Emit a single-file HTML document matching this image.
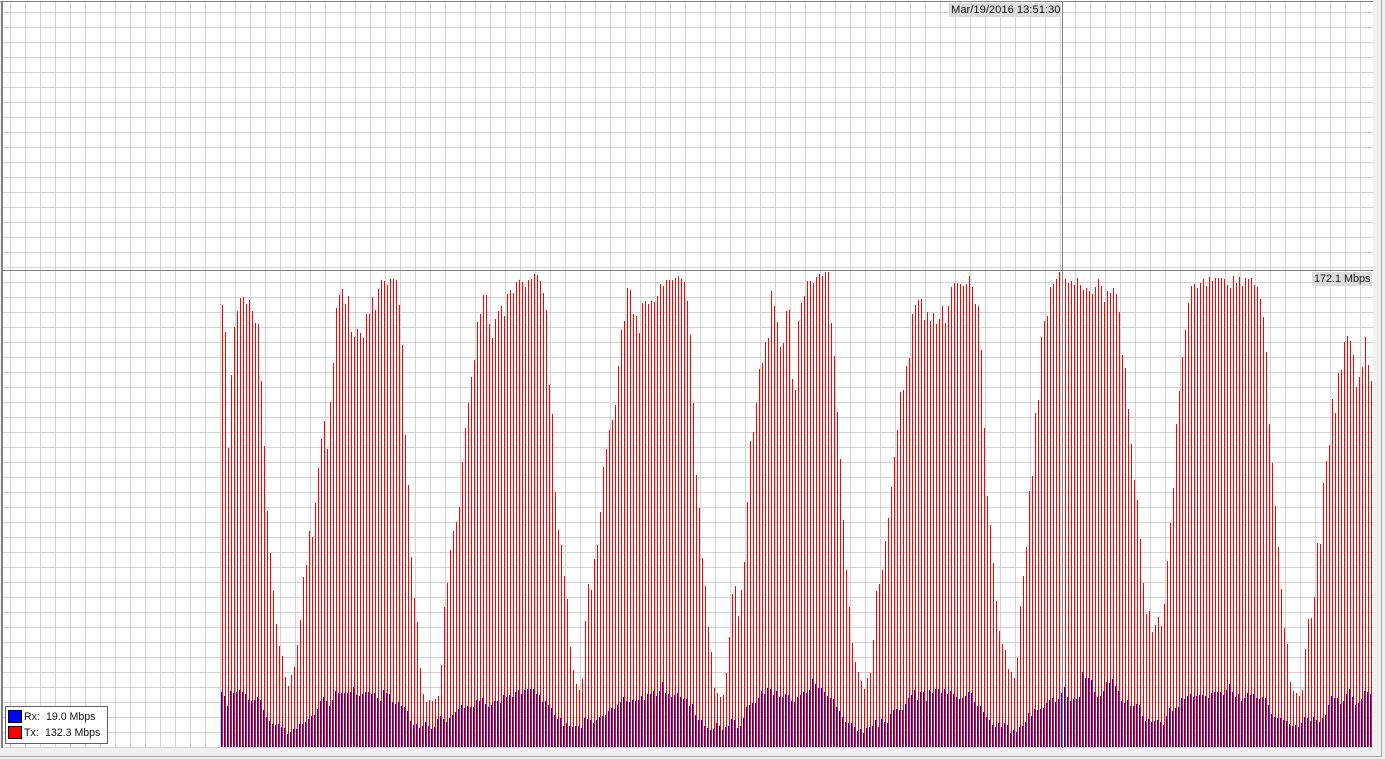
<!DOCTYPE html>
<html><head><meta charset="utf-8"><style>
html,body{margin:0;padding:0;width:1385px;height:759px;overflow:hidden;background:#f0f0f0}
body{position:relative;font-family:"Liberation Sans",sans-serif;font-size:10.6px;color:#111}
div,span,svg{position:absolute;display:block}
#plot{left:3px;top:2px;width:1370px;height:746px;background-color:#fff;background-image:linear-gradient(to right,#d2d2d2 1px,transparent 1px),linear-gradient(to bottom,#d2d2d2 1px,transparent 1px);background-size:15px 15px;background-position:7px 10px}
.t{white-space:nowrap;line-height:13px}
</style></head><body>
<div style="left:0;top:0;width:1373px;height:2px;background:#fff"></div>
<div style="left:0;top:1px;width:1373px;height:1px;background:#808080"></div>
<div style="left:1px;top:1px;width:2px;height:747px;background:#808080"></div>
<div id="plot"></div>
<svg style="left:0;top:0" width="1385" height="759" viewBox="0 0 1385 759">
<g transform="translate(.5,270) scale(1,.33333)" fill="none" stroke-width="1">
<path stroke="#f00" d="M222 1431V105M225 1431V186M228 1431V534M231 1431V315M234 1431V171M237 1431V123M240 1431V84M243 1431V81M246 1431V102M249 1431V90M252 1431V123M255 1431V159M258 1431V162M261 1431V333M264 1431V528M267 1431V723M270 1431V849M273 1431V963M276 1431V1062M279 1431V1128M282 1431V1158M285 1431V1221M288 1431V1248M291 1431V1215M294 1431V1191M297 1431V1125M300 1431V1050M303 1431V921M306 1431V885M309 1431V783M312 1431V801M315 1431V699M318 1431V594M321 1431V507M324 1431V453M327 1431V537M330 1431V396M333 1431V279M336 1431V114M339 1431V75M342 1431V57M345 1431V102M348 1431V78M351 1431V186M354 1431V201M357 1431V177M360 1431V189M363 1431V204M366 1431V132M369 1431V132M372 1431V81M375 1431V120M378 1431V57M381 1431V30M384 1431V33M387 1431V45M390 1431V27M393 1431V27M396 1431V30M399 1431V105M402 1431V225M405 1431V495M408 1431V645
M411 1431V861M414 1431V984M417 1431V1056M420 1431V1194M423 1431V1272M426 1431V1296M429 1431V1290M432 1431V1293M435 1431V1287M438 1431V1278M441 1431V1185M444 1431V1011M447 1431V939M450 1431V840M453 1431V783M456 1431V756M459 1431V711M462 1431V576M465 1431V474M468 1431V399M471 1431V321M474 1431V270M477 1431V156M480 1431V132M483 1431V75M486 1431V75M489 1431V162M492 1431V204M495 1431V147M498 1431V123M501 1431V108M504 1431V138M507 1431V72M510 1431V60M513 1431V69M516 1431V36M519 1431V30M522 1431V36M525 1431V51M528 1431V30M531 1431V27M534 1431V12M537 1431V15M540 1431V33M543 1431V69M546 1431V120M549 1431V345M552 1431V432M555 1431V666M558 1431V780M561 1431V825M564 1431V918M567 1431V987M570 1431V1131M573 1431V1200M576 1431V1242M579 1431V1260M582 1431V1227M585 1431V1053M588 1431V942M591 1431V960M594 1431V867M597 1431V825M600 1431V726M603 1431V591
M606 1431V537M609 1431V480M612 1431V450M615 1431V405M618 1431V288M621 1431V180M624 1431V153M627 1431V54M630 1431V60M633 1431V132M636 1431V138M639 1431V189M642 1431V99M645 1431V93M648 1431V102M651 1431V93M654 1431V96M657 1431V78M660 1431V42M663 1431V48M666 1431V30M669 1431V30M672 1431V30M675 1431V24M678 1431V18M681 1431V27M684 1431V36M687 1431V93M690 1431V195M693 1431V399M696 1431V615M699 1431V714M702 1431V864M705 1431V948M708 1431V1071M711 1431V1146M714 1431V1254M717 1431V1269M720 1431V1281M723 1431V1275M726 1431V1209M729 1431V1101M732 1431V972M735 1431V948M738 1431V1038M741 1431V960M744 1431V876M747 1431V696M750 1431V513M753 1431V486M756 1431V399M759 1431V297M762 1431V279M765 1431V216M768 1431V204M771 1431V63M774 1431V108M777 1431V156M780 1431V231M783 1431V219M786 1431V123M789 1431V120M792 1431V327M795 1431V360M798 1431V153
M801 1431V99M804 1431V78M807 1431V33M810 1431V33M813 1431V39M816 1431V21M819 1431V12M822 1431V18M825 1431V6M828 1431V6M831 1431V159M834 1431V258M837 1431V426M840 1431V567M843 1431V750M846 1431V900M849 1431V1011M852 1431V1119M855 1431V1176M858 1431V1206M861 1431V1233M864 1431V1257M867 1431V1224M870 1431V1209M873 1431V1110M876 1431V963M879 1431V942M882 1431V900M885 1431V813M888 1431V744M891 1431V651M894 1431V561M897 1431V480M900 1431V366M903 1431V360M906 1431V288M909 1431V264M912 1431V132M915 1431V105M918 1431V90M921 1431V87M924 1431V150M927 1431V126M930 1431V153M933 1431V129M936 1431V162M939 1431V147M942 1431V108M945 1431V159M948 1431V108M951 1431V51M954 1431V39M957 1431V39M960 1431V42M963 1431V48M966 1431V42M969 1431V18M972 1431V51M975 1431V102M978 1431V108M981 1431V240M984 1431V474M987 1431V678M990 1431V765M993 1431V879
M996 1431V993M999 1431V1083M1002 1431V1122M1005 1431V1140M1008 1431V1197M1011 1431V1206M1014 1431V1224M1017 1431V1164M1020 1431V1008M1023 1431V918M1026 1431V831M1029 1431V663M1032 1431V618M1035 1431V429M1038 1431V390M1041 1431V201M1044 1431V153M1047 1431V138M1050 1431V51M1053 1431V42M1056 1431V27M1059 1431V6M1065 1431V27M1068 1431V39M1071 1431V33M1074 1431V45M1077 1431V24M1080 1431V45M1083 1431V60M1086 1431V54M1089 1431V63M1092 1431V72M1095 1431V51M1098 1431V27M1101 1431V48M1104 1431V96M1107 1431V63M1110 1431V69M1113 1431V54M1116 1431V72M1119 1431V126M1122 1431V255M1125 1431V294M1128 1431V417M1131 1431V522M1134 1431V630M1137 1431V690M1140 1431V807M1143 1431V939M1146 1431V1032M1149 1431V1023M1152 1431V1086M1155 1431V1065M1158 1431V1041M1161 1431V1068M1164 1431V1002M1167 1431V873M1170 1431V759M1173 1431V654M1176 1431V462M1179 1431V363M1182 1431V261M1185 1431V180M1188 1431V99
M1191 1431V48M1194 1431V42M1197 1431V54M1200 1431V39M1203 1431V27M1206 1431V48M1209 1431V21M1212 1431V33M1215 1431V24M1218 1431V24M1221 1431V24M1224 1431V27M1227 1431V45M1230 1431V54M1233 1431V18M1236 1431V39M1239 1431V21M1242 1431V48M1245 1431V24M1248 1431V27M1251 1431V24M1254 1431V45M1257 1431V51M1260 1431V87M1263 1431V141M1266 1431V246M1269 1431V462M1272 1431V579M1275 1431V708M1278 1431V831M1281 1431V957M1284 1431V1074M1287 1431V1122M1290 1431V1236M1293 1431V1263M1296 1431V1269M1299 1431V1278M1302 1431V1260M1305 1431V1137M1308 1431V1047M1311 1431V1044M1314 1431V981M1317 1431V819M1320 1431V822M1323 1431V639M1326 1431V573M1329 1431V525M1332 1431V387M1335 1431V429M1338 1431V309M1341 1431V300M1344 1431V216M1347 1431V198M1350 1431V213M1353 1431V255M1356 1431V351M1359 1431V321M1362 1431V291M1365 1431V201M1368 1431V285M1371 1431V333"/>
<path stroke="#00f" d="M221 1431V1266M224 1431V1278M227 1431V1308M230 1431V1263M233 1431V1269M236 1431V1266M239 1431V1260M242 1431V1266M245 1431V1272M248 1431V1290M251 1431V1293M254 1431V1290M257 1431V1281M260 1431V1290M263 1431V1320M266 1431V1341M269 1431V1353M272 1431V1362M275 1431V1365M278 1431V1362M281 1431V1371M284 1431V1374M287 1431V1392M290 1431V1386M293 1431V1377M296 1431V1377M299 1431V1362M302 1431V1362M305 1431V1356M308 1431V1347M311 1431V1338M314 1431V1335M317 1431V1317M320 1431V1293M323 1431V1281M326 1431V1293M329 1431V1308M332 1431V1290M335 1431V1263M338 1431V1269M341 1431V1269M344 1431V1269M347 1431V1269M350 1431V1266M353 1431V1251M356 1431V1275M359 1431V1278M362 1431V1272M365 1431V1266M368 1431V1266M371 1431V1272M374 1431V1269M377 1431V1284M380 1431V1293M383 1431V1260M386 1431V1269M389 1431V1272M392 1431V1296M395 1431V1302M398 1431V1296M401 1431V1308M404 1431V1311M407 1431V1323
M410 1431V1353M413 1431V1365M416 1431V1362M419 1431V1374M422 1431V1368M425 1431V1356M428 1431V1368M431 1431V1377M434 1431V1371M437 1431V1347M440 1431V1338M443 1431V1347M446 1431V1356M449 1431V1344M452 1431V1335M455 1431V1326M458 1431V1317M461 1431V1305M464 1431V1314M467 1431V1308M470 1431V1311M473 1431V1311M476 1431V1290M479 1431V1293M482 1431V1284M485 1431V1302M488 1431V1311M491 1431V1305M494 1431V1293M497 1431V1293M500 1431V1299M503 1431V1275M506 1431V1281M509 1431V1275M512 1431V1281M515 1431V1266M518 1431V1260M521 1431V1272M524 1431V1260M527 1431V1257M530 1431V1257M533 1431V1257M536 1431V1272M539 1431V1275M542 1431V1296M545 1431V1293M548 1431V1305M551 1431V1314M554 1431V1335M557 1431V1347M560 1431V1344M563 1431V1368M566 1431V1359M569 1431V1368M572 1431V1371M575 1431V1368M578 1431V1368M581 1431V1374M584 1431V1344M587 1431V1347M590 1431V1350M593 1431V1359M596 1431V1350M599 1431V1341M602 1431V1338
M605 1431V1335M608 1431V1323M611 1431V1314M614 1431V1317M617 1431V1305M620 1431V1296M623 1431V1281M626 1431V1293M629 1431V1296M632 1431V1290M635 1431V1293M638 1431V1290M641 1431V1278M644 1431V1290M647 1431V1272M650 1431V1272M653 1431V1263M656 1431V1278M659 1431V1263M662 1431V1236M665 1431V1269M668 1431V1272M671 1431V1281M674 1431V1275M677 1431V1269M680 1431V1281M683 1431V1287M686 1431V1287M689 1431V1308M692 1431V1302M695 1431V1335M698 1431V1350M701 1431V1350M704 1431V1368M707 1431V1374M710 1431V1380M713 1431V1377M716 1431V1359M719 1431V1368M722 1431V1380M725 1431V1371M728 1431V1368M731 1431V1347M734 1431V1350M737 1431V1374M740 1431V1368M743 1431V1344M746 1431V1311M749 1431V1305M752 1431V1299M755 1431V1299M758 1431V1284M761 1431V1263M764 1431V1272M767 1431V1254M770 1431V1257M773 1431V1275M776 1431V1263M779 1431V1281M782 1431V1281M785 1431V1272M788 1431V1275M791 1431V1293M794 1431V1296M797 1431V1281
M800 1431V1275M803 1431V1266M806 1431V1269M809 1431V1260M812 1431V1227M815 1431V1242M818 1431V1254M821 1431V1254M824 1431V1266M827 1431V1278M830 1431V1284M833 1431V1287M836 1431V1311M839 1431V1323M842 1431V1341M845 1431V1356M848 1431V1359M851 1431V1359M854 1431V1371M857 1431V1383M860 1431V1377M863 1431V1389M866 1431V1374M869 1431V1371M872 1431V1368M875 1431V1350M878 1431V1371M881 1431V1347M884 1431V1356M887 1431V1359M890 1431V1332M893 1431V1320M896 1431V1317M899 1431V1320M902 1431V1320M905 1431V1302M908 1431V1284M911 1431V1275M914 1431V1260M917 1431V1290M920 1431V1266M923 1431V1266M926 1431V1293M929 1431V1260M932 1431V1269M935 1431V1257M938 1431V1257M941 1431V1269M944 1431V1257M947 1431V1272M950 1431V1263M953 1431V1272M956 1431V1281M959 1431V1287M962 1431V1284M965 1431V1278M968 1431V1266M971 1431V1269M974 1431V1296M977 1431V1308M980 1431V1308M983 1431V1326M986 1431V1341M989 1431V1350M992 1431V1365
M995 1431V1371M998 1431V1359M1001 1431V1371M1004 1431V1359M1007 1431V1365M1010 1431V1389M1013 1431V1380M1016 1431V1386M1019 1431V1371M1022 1431V1368M1025 1431V1356M1028 1431V1329M1031 1431V1338M1034 1431V1317M1037 1431V1320M1040 1431V1317M1043 1431V1314M1046 1431V1299M1049 1431V1290M1052 1431V1284M1055 1431V1296M1058 1431V1287M1061 1431V1269M1064 1431V1251M1067 1431V1281M1070 1431V1293M1073 1431V1287M1076 1431V1287M1079 1431V1281M1082 1431V1206M1085 1431V1224M1088 1431V1224M1091 1431V1230M1094 1431V1266M1097 1431V1281M1100 1431V1278M1103 1431V1263M1106 1431V1236M1109 1431V1239M1112 1431V1227M1115 1431V1248M1118 1431V1263M1121 1431V1293M1124 1431V1299M1127 1431V1290M1130 1431V1308M1133 1431V1308M1136 1431V1302M1139 1431V1305M1142 1431V1338M1145 1431V1353M1148 1431V1347M1151 1431V1356M1154 1431V1353M1157 1431V1350M1160 1431V1356M1163 1431V1365M1166 1431V1338M1169 1431V1314M1172 1431V1323M1175 1431V1314M1178 1431V1311M1181 1431V1284M1184 1431V1287M1187 1431V1278
M1190 1431V1272M1193 1431V1281M1196 1431V1278M1199 1431V1275M1202 1431V1275M1205 1431V1278M1208 1431V1284M1211 1431V1269M1214 1431V1266M1217 1431V1266M1220 1431V1266M1223 1431V1275M1226 1431V1260M1229 1431V1242M1232 1431V1266M1235 1431V1281M1238 1431V1272M1241 1431V1293M1244 1431V1284M1247 1431V1269M1250 1431V1275M1253 1431V1272M1256 1431V1284M1259 1431V1287M1262 1431V1281M1265 1431V1284M1268 1431V1305M1271 1431V1332M1274 1431V1341M1277 1431V1344M1280 1431V1344M1283 1431V1350M1286 1431V1353M1289 1431V1362M1292 1431V1368M1295 1431V1365M1298 1431V1371M1301 1431V1359M1304 1431V1341M1307 1431V1344M1310 1431V1353M1313 1431V1341M1316 1431V1350M1319 1431V1356M1322 1431V1344M1325 1431V1335M1328 1431V1305M1331 1431V1278M1334 1431V1284M1337 1431V1284M1340 1431V1302M1343 1431V1293M1346 1431V1272M1349 1431V1257M1352 1431V1281M1355 1431V1305M1358 1431V1299M1361 1431V1287M1364 1431V1263M1367 1431V1266M1370 1431V1272"/>
</g>
</svg>
<div style="left:3px;top:270px;width:1370px;height:1px;background:#808080"></div>
<div style="left:1062px;top:2px;width:1px;height:746px;background:#808080"></div>
<div class="t" style="left:949px;top:3px;width:112px;height:14px;background:#dcdcdc"><span class="t" style="left:2px;top:1px;font-size:11.2px">Mar/19/2016 13:51:30</span></div>
<div class="t" style="left:1312px;top:272px;width:60px;height:14px;background:#dcdcdc"><span class="t" style="left:2px;top:1px;font-size:10.8px">172.1 Mbps</span></div>
<div style="left:5px;top:706px;width:101px;height:36px;background:#fff;border:1px solid #606060"></div>
<div style="left:8px;top:710px;width:12px;height:11px;background:#00f;border:1px solid #000"></div>
<div style="left:8px;top:726px;width:12px;height:11px;background:#f00;border:1px solid #000"></div>
<span class="t" style="left:24px;top:711px">Rx:</span><span class="t" style="left:46px;top:711px">19.0 Mbps</span>
<span class="t" style="left:24px;top:727px">Tx:</span><span class="t" style="left:45px;top:727px">132.3 Mbps</span>
<div style="left:1381px;top:0;width:1px;height:757px;background:#a8a8a8"></div>
<div style="left:0;top:756px;width:1382px;height:1px;background:#a8a8a8"></div>
</body></html>
